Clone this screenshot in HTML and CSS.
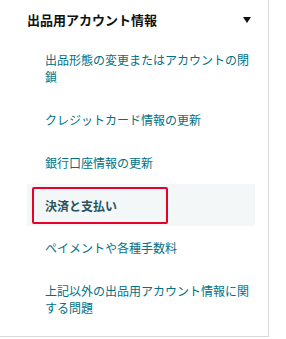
FILE: index.html
```html
<!DOCTYPE html>
<html lang="ja">
<head>
<meta charset="utf-8">
<link rel="stylesheet" href="styles.css">
</head>
<body>
<nav class="panel">
  <div class="panel-head">
    <span class="panel-title">出品用アカウント情報</span>
    <svg class="caret" width="8" height="6" viewBox="0 0 8 6"><path d="M0 0H8L4 6Z" fill="#0f1111"/></svg>
  </div>
  <ul class="menu">
    <li class="menu-item">出品形態の変更またはアカウントの閉鎖</li>
    <li class="menu-item">クレジットカード情報の更新</li>
    <li class="menu-item">銀行口座情報の更新</li>
    <li class="menu-item is-active">決済と支払い<span class="mark"></span></li>
    <li class="menu-item">ペイメントや各種手数料</li>
    <li class="menu-item">上記以外の出品用アカウント情報に関する問題</li>
  </ul>
</nav>
</body>
</html>
```
FILE: styles.css
```css
html, body {
  margin: 0;
  padding: 0;
  background: #fff;
}
body {
  font-family: "Noto Sans CJK JP", "Noto Sans", sans-serif;
}
.panel {
  width: 268px;
  height: 336px;
  border-right: 1px solid #d5d9d9;
  border-bottom: 1px solid #d5d9d9;
  box-sizing: content-box;
}
.panel-head {
  height: 38px;
  display: flex;
  align-items: center;
  justify-content: space-between;
  padding: 0 17px 0 27px;
}
.panel-title {
  font-size: 13px;
  font-weight: 700;
  color: #0f1111;
  line-height: 17px;
}
.caret {
  display: block;
  margin-top: 2px;
}
.menu {
  list-style: none;
  margin: 0 0 0 27px;
  padding: 0;
  width: 228px;
}
.menu-item {
  position: relative;
  font-size: 12px;
  line-height: 17px;
  color: #007185;
  padding: 13px 2px 13px 18px;
}
.menu-item.is-active {
  background: #f3f7f8;
  font-weight: 700;
  color: #2b5460;
  height: 16px;
}
.mark {
  position: absolute;
  left: 5px;
  top: 3px;
  width: 132px;
  height: 33px;
  border: 2px solid #e8002d;
  border-radius: 2px;
}
```
